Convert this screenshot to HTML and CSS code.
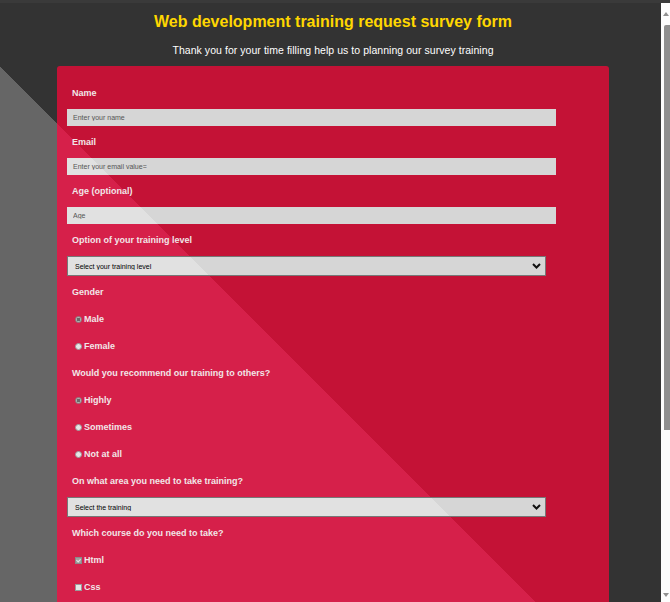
FILE: index.html
```html
<!DOCTYPE html>
<html lang="en">
<head>
<meta charset="utf-8">
<title>Web development training request survey form</title>
<link rel="stylesheet" href="styles.css">
</head>
<body>
<div class="page">
  <header class="header">
    <h1 class="title">Web development training request survey form</h1>
    <p class="subtitle">Thank you for your time filling help us to planning our survey training</p>
  </header>
  <form class="survey">
    <label class="field-label" for="name">Name</label>
    <input class="text-input" id="name" type="text" placeholder="Enter your name">

    <label class="field-label" for="email">Email</label>
    <input class="text-input" id="email" type="email" placeholder="Enter your email value=">

    <label class="field-label" for="age">Age (optional)</label>
    <input class="text-input" id="age" type="number" placeholder="Age">

    <label class="field-label" for="level">Option of your training level</label>
    <div class="select-wrap">
      <select class="select" id="level">
        <option>Select your training level</option>
        <option>Beginner</option>
        <option>Intermediate</option>
        <option>Advanced</option>
      </select>
      <svg class="chevron" width="9" height="6" viewBox="0 0 9 6"><polyline points="1,1 4.5,4.5 8,1" fill="none" stroke="#111" stroke-width="2"/></svg>
    </div>

    <span class="field-label">Gender</span>
    <div class="group">
      <label class="option"><input class="radio" type="radio" name="gender" checked>Male</label>
      <label class="option"><input class="radio" type="radio" name="gender">Female</label>
    </div>

    <span class="field-label">Would you recommend our training to others?</span>
    <div class="group">
      <label class="option"><input class="radio" type="radio" name="rec" checked>Highly</label>
      <label class="option"><input class="radio" type="radio" name="rec">Sometimes</label>
      <label class="option"><input class="radio" type="radio" name="rec">Not at all</label>
    </div>

    <label class="field-label" for="area">On what area you need to take training?</label>
    <div class="select-wrap">
      <select class="select" id="area">
        <option>Select the training</option>
        <option>Front-end</option>
        <option>Back-end</option>
        <option>Full stack</option>
      </select>
      <svg class="chevron" width="9" height="6" viewBox="0 0 9 6"><polyline points="1,1 4.5,4.5 8,1" fill="none" stroke="#111" stroke-width="2"/></svg>
    </div>

    <span class="field-label">Which course do you need to take?</span>
    <div class="group">
      <label class="option"><input class="check" type="checkbox" checked>Html</label>
      <label class="option"><input class="check" type="checkbox">Css</label>
    </div>
  </form>
</div>
<div class="scrollbar" aria-hidden="true">
  <span class="arrow arrow-up"></span>
  <span class="thumb"></span>
  <span class="arrow arrow-down"></span>
</div>
</body>
</html>
```
FILE: styles.css
```css
html {
  background: #333;
}

body {
  margin: 0;
  padding-bottom: 34px;
  border-top: 3px solid #3a3a3a;
  font-family: "Liberation Sans", Arial, sans-serif;
  background: linear-gradient(45deg, #666 379px, #333 379px) fixed;
  min-height: 100vh;
}

.page {
  width: 552px;
  margin-left: 57px;
}

.header {
  text-align: center;
  padding-top: 9px;
}

.title {
  margin: 0;
  font-size: 16px;
  line-height: 20px;
  font-weight: bold;
  color: #ffd700;
}

.subtitle {
  margin: 11px 0 9px;
  font-size: 10.5px;
  line-height: 14px;
  color: #fff;
  letter-spacing: 0.05px;
}

.survey {
  display: flex;
  flex-direction: column;
  align-items: flex-start;
  padding: 21px 0 180px;
  border-radius: 3px;
  background: linear-gradient(45deg, #d6204a 379px, #c41236 379px) fixed;
}

.field-label {
  margin-left: 15px;
  font-size: 9px;
  line-height: 12px;
  font-weight: bold;
  color: #f1e6e8;
}

.text-input {
  box-sizing: border-box;
  width: 489px;
  height: 17px;
  margin: 10px 0 10px 10px;
  padding: 0 0 0 6px;
  border: 0;
  outline: 0;
  font-family: "Liberation Sans", Arial, sans-serif;
  font-size: 7px;
  color: #333;
  background: linear-gradient(45deg, #e1e1e1 379px, #d6d6d6 379px) fixed;
}

.text-input::placeholder {
  color: #555;
}

.select-wrap {
  position: relative;
  margin: 10px 0 10px 10px;
  display: flex;
}

.select {
  appearance: none;
  -webkit-appearance: none;
  box-sizing: border-box;
  width: 479px;
  height: 20px;
  padding: 0 0 0 7px;
  border: 1px solid #777;
  border-radius: 0;
  outline: 0;
  font-family: "Liberation Sans", Arial, sans-serif;
  font-size: 7px;
  color: #000;
  background: linear-gradient(45deg, #e1e1e1 379px, #d6d6d6 379px) fixed;
}

.chevron {
  position: absolute;
  right: 5px;
  top: 7px;
  pointer-events: none;
}

.group {
  display: flex;
  flex-direction: column;
  gap: 15px;
  margin: 15px 0 15px 18px;
}

.option {
  display: flex;
  align-items: center;
  gap: 2px;
  font-size: 9px;
  line-height: 12px;
  font-weight: bold;
  color: #f1e6e8;
}

.radio,
.check {
  appearance: none;
  -webkit-appearance: none;
  position: relative;
  box-sizing: border-box;
  width: 7px;
  height: 7px;
  margin: 0;
  border: 1px solid #9a9a9a;
  background: #e6e6e6;
}

.radio {
  border-radius: 50%;
}

.radio:checked {
  background: radial-gradient(circle, #6a6a6a 0 1.6px, #b0b0b0 2px);
  border-color: #8a8a8a;
}

.check:checked {
  background: #a0a0a0;
  border-color: #8a8a8a;
}

.check:checked::after {
  content: "";
  position: absolute;
  left: 1px;
  top: 0;
  width: 2px;
  height: 3px;
  border: solid #e8e8e8;
  border-width: 0 1px 1px 0;
  transform: rotate(45deg);
}

/* window scrollbar, drawn over the page edge */
.scrollbar {
  position: fixed;
  top: 3px;
  right: 0;
  bottom: 0;
  width: 9px;
  background: #fcfcfc;
  display: flex;
  flex-direction: column;
  align-items: flex-end;
}

.arrow {
  width: 0;
  height: 0;
  margin-right: 1px;
  border-left: 3px solid transparent;
  border-right: 3px solid transparent;
}

.arrow-up {
  margin-top: 9px;
  border-bottom: 4px solid #8f8f8f;
}

.thumb {
  width: 6px;
  height: 405px;
  margin-top: 9px;
  border-radius: 2px 0 0 0;
  background: #8f8f8f;
}

.arrow-down {
  margin-top: auto;
  margin-bottom: 5px;
  border-top: 4px solid #8f8f8f;
}
```
